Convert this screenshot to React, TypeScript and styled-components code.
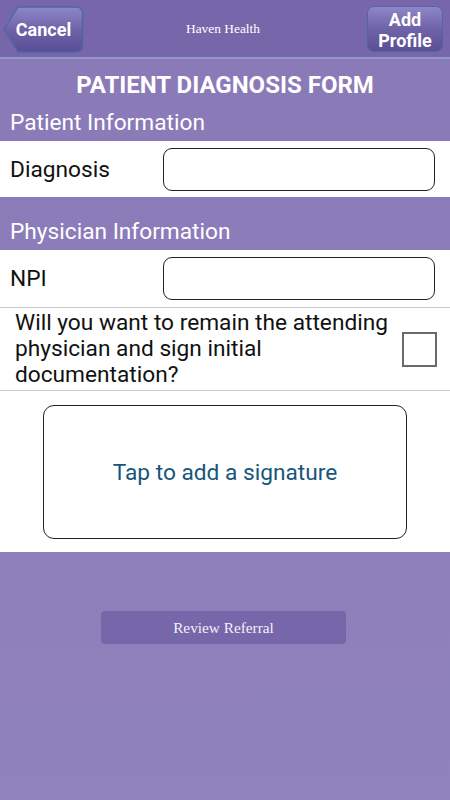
import React from "react";
import styled, { createGlobalStyle } from "styled-components";

const Global = createGlobalStyle`
  html, body { margin: 0; padding: 0; }
  body {
    width: 450px;
    height: 800px;
    overflow: hidden;
    font-family: Roboto, "Noto Sans", sans-serif;
    background: linear-gradient(180deg, #8a79b7 0%, #9082bc 100%);
  }
`;

const Page = styled.div`
  width: 450px;
  min-height: 800px;
  display: flex;
  flex-direction: column;
`;

const Header = styled.header`
  height: 57px;
  background: #7866ab;
  border-bottom: 2px solid #8f9acb;
  display: grid;
  grid-template-columns: 1fr auto 1fr;
  align-items: center;
  padding: 0 7px 0 3px;
`;

const BackButton = styled.button`
  position: relative;
  width: 81px;
  height: 47px;
  margin-top: 1px;
  padding: 0;
  border: none;
  background: none;
  color: #fff;
  font-family: Roboto, sans-serif;
  font-weight: 700;
  font-size: 18px;
  display: flex;
  align-items: center;
  justify-content: center;
  justify-self: start;
  span { position: relative; }
  svg { position: absolute; left: 0; top: 0; }
`;

const ProfileButton = styled.button`
  width: 76px;
  height: 46px;
  margin-top: 1px;
  justify-self: end;
  border: 1px solid #4d67a6;
  border-radius: 7px;
  background: linear-gradient(180deg, #8f86c6 0%, #6e63a9 50%, #5b4f96 100%);
  color: #fff;
  font-family: Roboto, sans-serif;
  font-weight: 700;
  font-size: 18px;
  line-height: 21px;
  padding: 2px 0 0;
`;

const Brand = styled.div`
  font-family: "Liberation Serif", serif;
  font-size: 13.4px;
  color: #fff;
`;

const Title = styled.h1`
  margin: 0;
  padding-top: 12px;
  height: 45px;
  box-sizing: border-box;
  text-align: center;
  color: #fff;
  font-size: 24px;
  font-weight: 700;
  line-height: 28px;
`;

const SectionTitle = styled.div<{ $top: number }>`
  color: #fff;
  font-size: 22.7px;
  line-height: 26px;
  padding: ${(p) => p.$top}px 10px 0;
  height: ${(p) => p.$top + 31}px;
  box-sizing: border-box;
`;

const FieldRow = styled.div<{ $divider?: boolean }>`
  background: #fff;
  height: ${(p) => (p.$divider ? 58 : 56)}px;
  display: flex;
  align-items: center;
  padding: 0 15px ${(p) => (p.$divider ? 1 : 0)}px 10px;
  box-sizing: border-box;
  border-bottom: ${(p) => (p.$divider ? "1px solid #c8c8c8" : "none")};
`;

const Label = styled.label`
  width: 153px;
  font-size: 22.7px;
  color: #111;
`;

const TextInput = styled.input`
  flex: 1;
  height: 43px;
  box-sizing: border-box;
  border: 1.5px solid #222;
  border-radius: 9px;
  background: #fff;
`;

const QuestionRow = styled.div`
  background: #fff;
  display: flex;
  align-items: center;
  gap: 12px;
  padding: 0 13px 0 15px;
  height: 83px;
  box-sizing: border-box;
  border-bottom: 1px solid #c8c8c8;
`;

const Question = styled.div`
  flex: 1;
  font-size: 22.7px;
  line-height: 26px;
  color: #111;
`;

const Check = styled.div`
  width: 31px;
  height: 31px;
  border: 2px solid #6a6a6a;
  box-sizing: content-box;
  flex: none;
`;

const SignatureArea = styled.div`
  background: #fff;
  padding: 14px 43px 0 43px;
  height: 161px;
  box-sizing: border-box;
`;

const SignatureBox = styled.div`
  height: 134px;
  border: 1.5px solid #222;
  border-radius: 11px;
  display: flex;
  align-items: center;
  justify-content: center;
  color: #17557a;
  font-size: 22.7px;
  box-sizing: border-box;
`;

const Footer = styled.div`
  display: flex;
  justify-content: center;
  padding: 59px 3px 0 0;
`;

const ReviewButton = styled.button`
  width: 245px;
  height: 33px;
  background: #7866ab;
  border: none;
  border-radius: 4px;
  color: #f4f0fa;
  font-family: "Liberation Serif", serif;
  font-size: 15.3px;
`;

export default function App() {
  return (
    <Page>
      <Global />
      <Header>
        <BackButton>
          <svg width="81" height="47" viewBox="0 0 81 47">
            <defs>
              <linearGradient id="cg" x1="0" y1="0" x2="0" y2="1">
                <stop offset="0" stopColor="#8f86c6" />
                <stop offset="0.5" stopColor="#6e63a9" />
                <stop offset="1" stopColor="#5a4e95" />
              </linearGradient>
            </defs>
            <path
              d="M1 23.5 L15 1 H73 Q79.5 1 79.5 7.5 V39.5 Q79.5 46 73 46 H15 Z"
              fill="url(#cg)"
              stroke="#4d67a6"
              strokeWidth="1.3"
              strokeLinejoin="round"
            />
          </svg>
          <span>Cancel</span>
        </BackButton>
        <Brand>Haven Health</Brand>
        <ProfileButton>
          Add
          <br />
          Profile
        </ProfileButton>
      </Header>
      <Title>PATIENT DIAGNOSIS FORM</Title>
      <SectionTitle $top={6}>Patient Information</SectionTitle>
      <FieldRow>
        <Label>Diagnosis</Label>
        <TextInput />
      </FieldRow>
      <SectionTitle $top={22}>Physician Information</SectionTitle>
      <FieldRow $divider>
        <Label>NPI</Label>
        <TextInput />
      </FieldRow>
      <QuestionRow>
        <Question>
          Will you want to remain the attending physician and sign initial documentation?
        </Question>
        <Check />
      </QuestionRow>
      <SignatureArea>
        <SignatureBox>Tap to add a signature</SignatureBox>
      </SignatureArea>
      <Footer>
        <ReviewButton>Review Referral</ReviewButton>
      </Footer>
    </Page>
  );
}
